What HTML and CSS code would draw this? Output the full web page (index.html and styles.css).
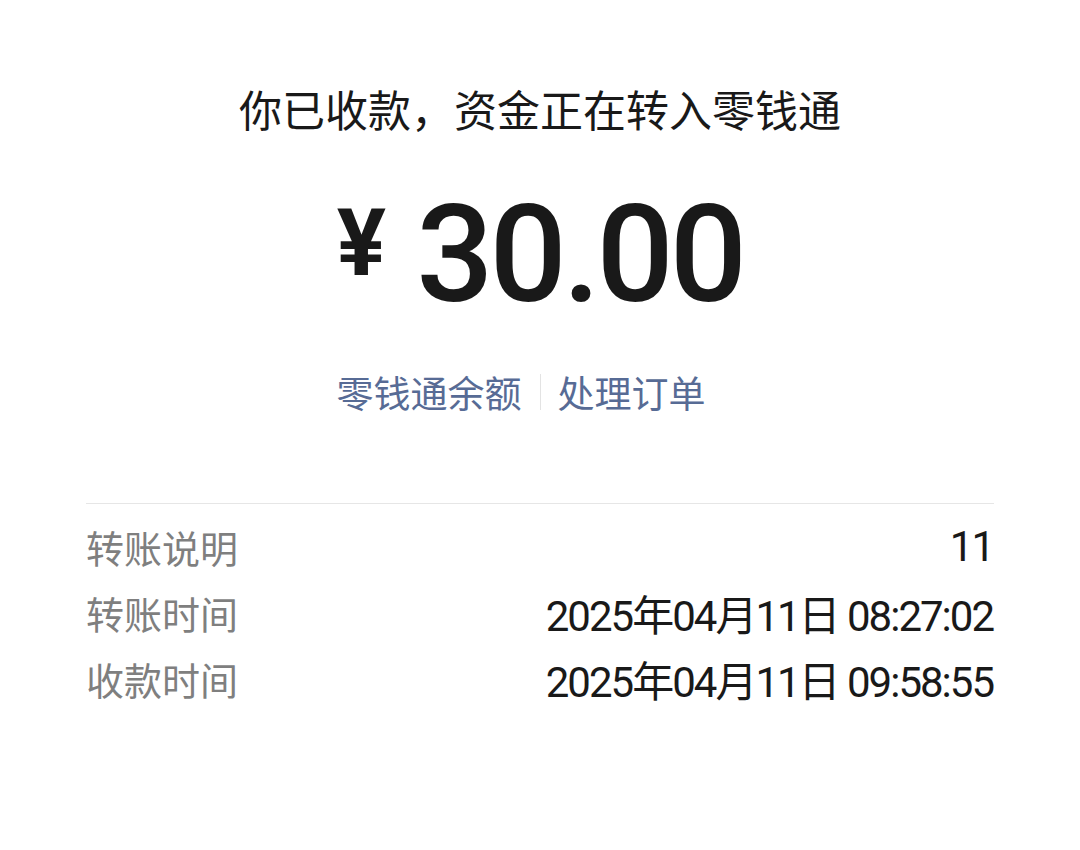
FILE: index.html
```html
<!DOCTYPE html>
<html lang="zh-CN">
<head>
<meta charset="utf-8">
<link rel="stylesheet" href="styles.css">
</head>
<body>
<main class="page">
  <h1 class="title">你已收款，资金正在转入零钱通</h1>
  <div class="amount">
    <span class="yen">¥</span>
    <span class="num">30.00</span>
  </div>
  <div class="links">
    <a class="link link-left">零钱通余额</a>
    <span class="sep"></span>
    <a class="link link-right">处理订单</a>
  </div>
  <div class="details">
    <div class="row"><span class="label">转账说明</span><span class="value">11</span></div>
    <div class="row"><span class="label">转账时间</span><span class="value">2025年04月11日 08:27:02</span></div>
    <div class="row"><span class="label">收款时间</span><span class="value">2025年04月11日 09:58:55</span></div>
  </div>
</main>
</body>
</html>
```
FILE: styles.css
```css
html, body {
  margin: 0;
  padding: 0;
  background: #ffffff;
}
body {
  font-family: "Noto Sans CJK SC", "Noto Sans", sans-serif;
  color: #191919;
}
.page {
  width: 1080px;
  height: 850px;
  box-sizing: border-box;
  padding: 78px 86px 0;
  display: flex;
  flex-direction: column;
  align-items: center;
}
.title {
  margin: 0;
  font-size: 43px;
  font-weight: 400;
  line-height: 60px;
  color: #191919;
}
.amount {
  margin-top: 52px;
  display: flex;
  align-items: center;
  gap: 30px;
  height: 130px;
}
.yen {
  font-family: "Roboto", sans-serif;
  font-weight: 700;
  font-size: 92px;
  line-height: 1;
  position: relative;
  top: -11px;
}
.num {
  font-family: "Roboto", sans-serif;
  font-weight: 500;
  font-size: 136px;
  line-height: 1;
  letter-spacing: -4px;
}
.links {
  align-self: stretch;
  margin-top: 47px;
  display: grid;
  grid-template-columns: 1fr auto 1fr;
  align-items: center;
  column-gap: 17px;
  height: 50px;
  margin-left: -86px;
  margin-right: -86px;
}
.link {
  font-size: 37px;
  color: #576b95;
  line-height: 50px;
}
.link-left {
  justify-self: end;
  margin-right: 1px;
}
.link-right {
  justify-self: start;
}
.sep {
  width: 1px;
  height: 36px;
  background: #e3e3e3;
}
.details {
  align-self: stretch;
  margin-top: 86px;
  border-top: 1px solid #e6e6e6;
  padding-top: 17px;
  display: flex;
  flex-direction: column;
  gap: 16px;
}
.row {
  display: flex;
  justify-content: space-between;
  align-items: center;
  height: 50px;
}
.label {
  font-size: 38px;
  color: #7f7f7f;
}
.value {
  font-size: 42px;
  color: #191919;
  font-family: "Roboto", "Noto Sans CJK SC", sans-serif;
  letter-spacing: -2px;
  margin-right: 1px;
}
```
